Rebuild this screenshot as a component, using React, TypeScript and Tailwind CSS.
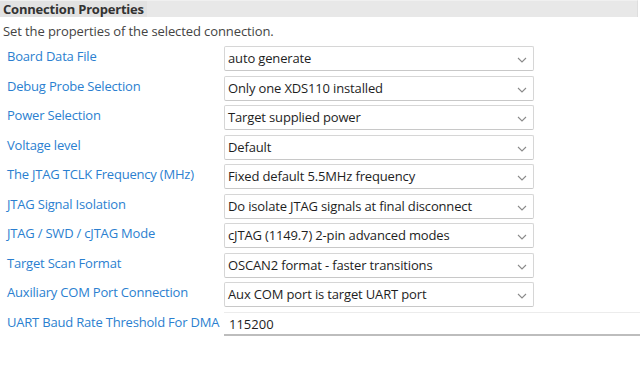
import React from "react";

const rows: [string, string][] = [
  ["Board Data File", "auto generate"],
  ["Debug Probe Selection", "Only one XDS110 installed"],
  ["Power Selection", "Target supplied power"],
  ["Voltage level", "Default"],
  ["The JTAG TCLK Frequency (MHz)", "Fixed default 5.5MHz frequency"],
  ["JTAG Signal Isolation", "Do isolate JTAG signals at final disconnect"],
  ["JTAG / SWD / cJTAG Mode", "cJTAG (1149.7) 2-pin advanced modes"],
  ["Target Scan Format", "OSCAN2 format - faster transitions"],
  ["Auxiliary COM Port Connection", "Aux COM port is target UART port"],
];

function Chevron() {
  return (
    <svg width="10" height="6" viewBox="0 0 10 6" className="absolute right-[6px] top-[10px]">
      <path d="M1 1 L5 5 L9 1" fill="none" stroke="#8a8a8a" strokeWidth="1.1" />
    </svg>
  );
}

export default function App() {
  return (
    <div
      className="w-[640px] h-[372px] bg-white overflow-hidden text-[13px] text-[#222]"
      style={{ fontFamily: '"Open Sans", "Noto Sans", sans-serif' }}
    >
      <div className="h-[17px] bg-[#e8e8e8] border-t border-[#f0f0f0] flex items-center mr-[2px] border-r border-r-[#dedede]">
        <div className="h-full bg-[#e2e2e2] pl-[3px] pr-[3px] font-bold text-[13px] leading-[16px] text-[#333] tracking-[-0.2px]">
          Connection Properties
        </div>
      </div>
      <div className="pl-[3px] pt-[5px] leading-[18px] text-[#444] tracking-[-0.1px]">
        Set the properties of the selected connection.
      </div>
      <div className="flex flex-col gap-[4.5px] pt-[6px]">
        {rows.map(([label, value]) => (
          <div key={label} className="flex h-[25px]">
            <div className="w-[224px] pl-[7px] text-[#2b7fd0] leading-[20px] tracking-[-0.2px] whitespace-nowrap">
              {label}
            </div>
            <div className="relative w-[310px] h-[25px] border border-[#d6d6d6] border-b-[#c8c8c8] rounded-[2px] bg-white pl-[3px] leading-[23px] tracking-[-0.15px] text-[#1e1e1e]">
              {value}
              <Chevron />
            </div>
          </div>
        ))}
        <div className="flex h-[25px]">
          <div className="w-[224px] pl-[7px] text-[#2b7fd0] leading-[20px] tracking-[-0.2px] whitespace-nowrap">
            UART Baud Rate Threshold For DMA
          </div>
          <div className="flex-1 h-[24px] border-t border-[#ececec] border-b-2 border-b-[#bdbdbd] pl-[5px] leading-[22px] text-[#1e1e1e]">
            115200
          </div>
        </div>
      </div>
    </div>
  );
}
